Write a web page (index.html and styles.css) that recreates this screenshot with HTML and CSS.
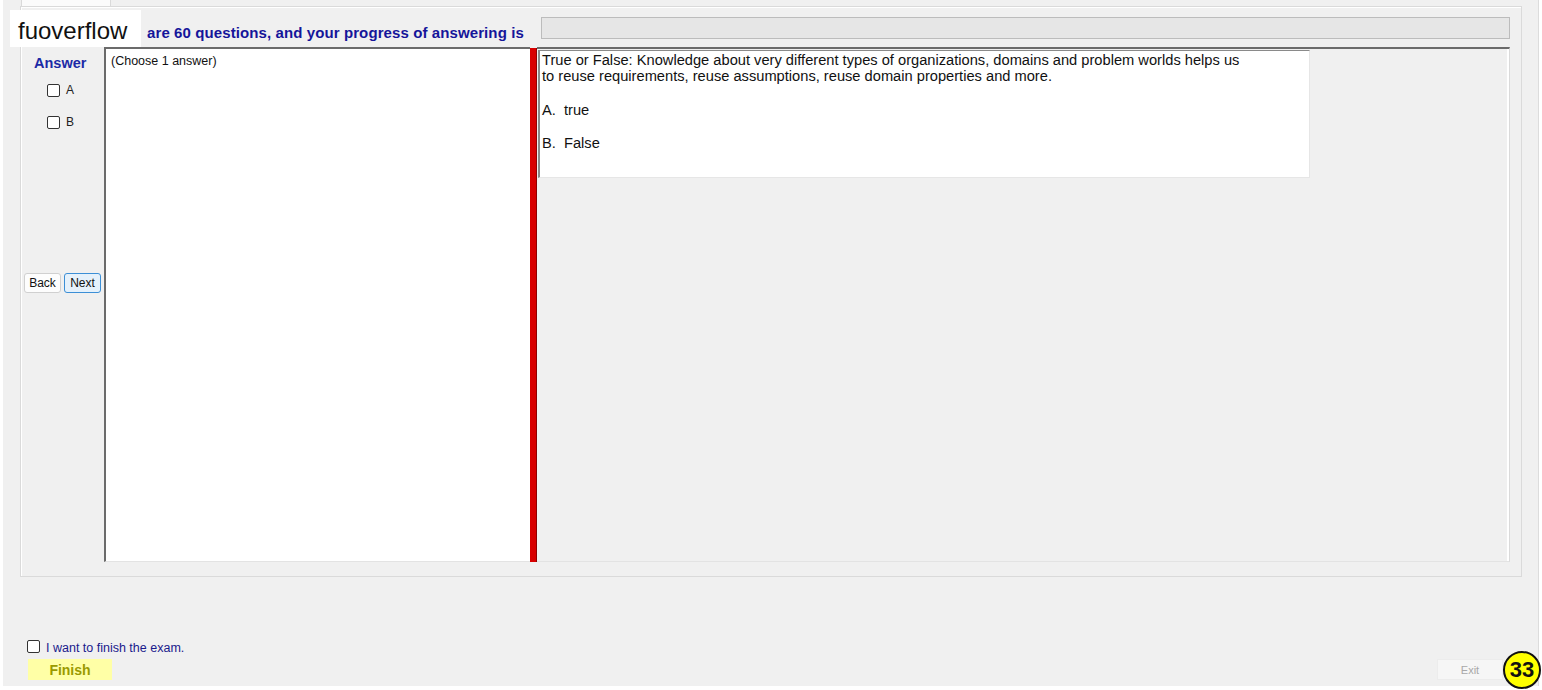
FILE: index.html
```html
<!DOCTYPE html>
<html lang="en">
<head>
    <meta charset="UTF-8">
    <title>Exam</title>
    <link rel="stylesheet" href="styles.css">
</head>
<body>

    <div class="window">
        <!-- Tab strip -->
        <div class="tabs">
            <div class="tab"></div>
        </div>

        <div class="pane">
            <div class="header">
                <div class="header-text">are 60 questions, and your progress of answering is</div>
                <div class="progress"></div>
            </div>

            <div class="main">
                <div class="answers">
                    <div class="answer-title">Answer</div>
                    <label class="opt"><input type="checkbox" class="check"> A</label>
                    <label class="opt"><input type="checkbox" class="check"> B</label>
                    <div class="nav-buttons">
                        <button class="btn">Back</button>
                        <button class="btn btn-active">Next</button>
                    </div>
                </div>

                <div class="choose">(Choose 1 answer)</div>
                <div class="splitter"></div>

                <div class="question">
                    <div class="qbox">
                        <p>True or False: Knowledge about very different types of organizations, domains and problem worlds helps us<br>to reuse requirements, reuse assumptions, reuse domain properties and more.</p>
                        <p>A.&nbsp; true</p>
                        <p>B.&nbsp; False</p>
                    </div>
                </div>
            </div>
        </div>

        <div class="finish-area">
            <label class="finish-check"><input type="checkbox" class="check"> I want to finish the exam.</label>
            <div class="bottom-row">
                <button class="finish-btn">Finish</button>
                <button class="exit-btn">Exit</button>
            </div>
        </div>
    </div>

    <div class="watermark">fuoverflow</div>
    <div class="badge">33</div>

</body>
</html>
```

FILE: styles.css
```css
body {
    margin: 0;
    padding: 0;
    background: #ffffff;
    font-family: "Liberation Sans", Arial, sans-serif;
    position: relative;
    width: 1542px;
    height: 690px;
    overflow: hidden;
}

/* Window */
.window {
    margin-left: 3px;
    width: 1536px;
    height: 686px;
    box-sizing: border-box;
    padding: 0 16px 0 17px;
    background: #f0f0f0;
    border-right: 1px solid #dcdcdc;
}

.tabs {
    height: 6px;
}

.tab {
    width: 90px;
    height: 6px;
    margin-left: 1px;
    box-sizing: border-box;
    background: #fbfbfb;
    border-left: 1px solid #dadada;
    border-right: 1px solid #dadada;
}

.pane {
    height: 571px;
    box-sizing: border-box;
    border: 1px solid #dadada;
    box-shadow: inset 1px 1px 0 #ffffff;
    display: flex;
    flex-direction: column;
}

/* Header */
.header {
    height: 40px;
    display: flex;
    align-items: center;
    padding-left: 126px;
    padding-right: 11px;
}

.header-text {
    color: #15159a;
    font-weight: bold;
    font-size: 15px;
    letter-spacing: 0.1px;
    margin-top: 10px;
    width: 394px;
}

.progress {
    flex: 1;
    height: 22px;
    margin-top: 1px;
    box-sizing: border-box;
    background: #e6e6e6;
    border: 1px solid #bcbcbc;
}

/* Main area */
.main {
    height: 515px;
    display: flex;
    margin-right: 11px;
}

.answers {
    width: 83px;
    display: flex;
    flex-direction: column;
}

.answer-title {
    color: #1c2aa6;
    font-weight: bold;
    font-size: 14.5px;
    padding: 8px 0 0 13px;
}

.opt {
    display: flex;
    align-items: center;
    font-size: 12px;
    color: #222;
    padding-left: 26px;
    margin-top: 12px;
    height: 14px;
}

.opt + .opt {
    margin-top: 18px;
}

.check {
    appearance: none;
    -webkit-appearance: none;
    width: 13px;
    height: 13px;
    margin: 0 6px 0 0;
    box-sizing: border-box;
    border: 1px solid #333;
    border-radius: 2px;
    background: #fff;
}

.nav-buttons {
    display: flex;
    gap: 3px;
    margin-top: 144px;
    padding-left: 3px;
}

.btn {
    width: 37px;
    height: 20px;
    padding: 0;
    font-family: "Liberation Sans", Arial, sans-serif;
    font-size: 12px;
    color: #111;
    background: #fdfdfd;
    border: 1px solid #d0d0d0;
    border-radius: 3px;
}

.btn-active {
    background: #e5f1fb;
    border: 1px solid #3c8fd6;
}

.choose {
    width: 426px;
    box-sizing: border-box;
    background: #ffffff;
    border-left: 2px solid #6b6b6b;
    border-top: 2px solid #6b6b6b;
    border-bottom: 1px solid #e3e3e3;
    font-size: 12.5px;
    color: #111;
    padding: 5px 5px;
}

.splitter {
    width: 7px;
    box-sizing: border-box;
    background: #d80000;
    border-right: 1px solid #8f0000;
    margin-top: 1px;
}

.question {
    flex: 1;
    box-sizing: border-box;
    border-top: 2px solid #6b6b6b;
    border-right: 1px solid #dadada;
    border-bottom: 1px solid #e3e3e3;
    box-shadow: inset -2px 0 0 #ffffff;
    padding: 1px 0 0 1px;
}

.qbox {
    width: 772px;
    height: 128px;
    box-sizing: border-box;
    background: #ffffff;
    border-left: 2px solid #8a8a8a;
    border-top: 1px solid #8a8a8a;
    border-right: 1px solid #e6e6e6;
    border-bottom: 1px solid #e6e6e6;
    padding: 1px 2px;
    font-size: 14.67px;
    line-height: 16px;
    color: #111;
}

.qbox p {
    margin: 0 0 17.5px 0;
}

/* Bottom */
.finish-area {
    padding: 64px 0 0 7px;
}

.finish-check {
    display: flex;
    align-items: center;
    font-size: 12.5px;
    color: #1a1a8c;
}

.finish-check .check {
    margin-top: -3px;
}

.bottom-row {
    display: flex;
    justify-content: space-between;
    align-items: center;
    margin-top: 4px;
    padding-right: 19px;
}

.finish-btn {
    width: 84px;
    height: 21px;
    margin-left: 1px;
    padding: 0;
    border: none;
    background: #ffffa6;
    color: #9a9a00;
    font-family: "Liberation Sans", Arial, sans-serif;
    font-weight: bold;
    font-size: 14px;
}

.exit-btn {
    width: 66px;
    height: 21px;
    padding: 0;
    border: 1px solid #ececec;
    background: #f6f6f6;
    color: #a8a8a8;
    font-family: "Liberation Sans", Arial, sans-serif;
    font-size: 11px;
}

/* Overlays */
.watermark {
    position: absolute;
    left: 10px;
    top: 10px;
    width: 131px;
    height: 37px;
    box-sizing: border-box;
    padding-left: 8px;
    background: #ffffff;
    font-size: 24px;
    line-height: 42px;
    color: #111;
}

.badge {
    position: absolute;
    left: 1503px;
    top: 651px;
    width: 38px;
    height: 38px;
    box-sizing: border-box;
    border: 2px solid #111;
    border-radius: 50%;
    background: #ffff00;
    font-weight: bold;
    font-size: 22px;
    line-height: 34px;
    text-align: center;
    color: #111;
}
```
